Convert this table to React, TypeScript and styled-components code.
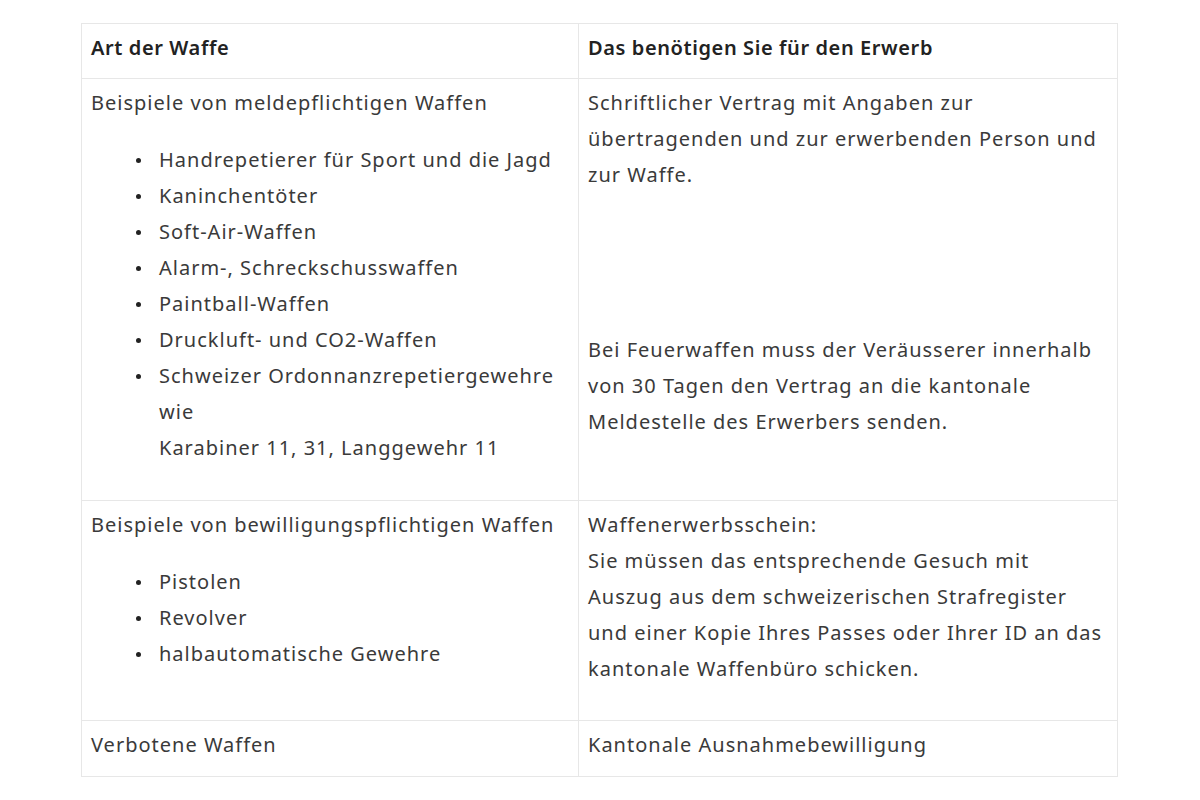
import React from "react";
import styled, {createGlobalStyle} from "styled-components";

const GlobalStyle = createGlobalStyle`
	html, body { margin: 0; padding: 0; background: #fff; }
	body { font-family: "Noto Sans", "Liberation Sans", sans-serif; color: #3a3a3a; }
`

const Page = styled.div`
	padding: 23px 0 0 81px;
`

const Table = styled.table`
	width: 1036px;
	border-collapse: collapse;
	table-layout: fixed;
	font-size: 20px;
	line-height: 36px;
	letter-spacing: 1px;
`

const HeadCell = styled.th`
	text-align: left;
	font-weight: 600;
	letter-spacing: 0.6px;
	color: #222;
	padding: 6px 9px 12px;
	border: 1px solid #e7e7e7;
	vertical-align: top;
`

const Cell = styled.td`
	padding: 6px 9px 13px;
	border: 1px solid #e7e7e7;
	vertical-align: top;
	white-space: nowrap;
`

const Text = styled.p<{ $top?: number; $bottom?: number }>`
	margin: ${(p) => p.$top || 0}px 0 ${(p) => p.$bottom || 0}px;
`

const List = styled.ul`
	margin: 21px 0;
	padding-left: 68px;
	list-style: none;
`

const Item = styled.li`
	position: relative;
	&::before {
		content: "";
		position: absolute;
		left: -23px;
		top: 16px;
		width: 5px;
		height: 5px;
		border-radius: 50%;
		background: #222;
	}
`

const Weapons = () => {
	return (
		<Page>
			<GlobalStyle />
			<Table>
				<colgroup>
					<col style={{width: 497}} />
					<col style={{width: 539}} />
				</colgroup>
				<thead>
					<tr>
						<HeadCell>Art der Waffe</HeadCell>
						<HeadCell>Das benötigen Sie für den Erwerb</HeadCell>
					</tr>
				</thead>
				<tbody>
					<tr>
						<Cell>
							<Text>Beispiele von meldepflichtigen Waffen</Text>
							<List>
								<Item>Handrepetierer für Sport und die Jagd</Item>
								<Item>Kaninchentöter</Item>
								<Item>Soft-Air-Waffen</Item>
								<Item>Alarm-, Schreckschusswaffen</Item>
								<Item>Paintball-Waffen</Item>
								<Item>Druckluft- und CO2-Waffen</Item>
								<Item>Schweizer Ordonnanzrepetiergewehre<br />wie<br />Karabiner 11, 31, Langgewehr 11</Item>
							</List>
						</Cell>
						<Cell>
							<Text>Schriftlicher Vertrag mit Angaben zur<br />übertragenden und zur erwerbenden Person und<br />zur Waffe.</Text>
							<Text $top={139}>Bei Feuerwaffen muss der Veräusserer innerhalb<br />von 30 Tagen den Vertrag an die kantonale<br />Meldestelle des Erwerbers senden.</Text>
						</Cell>
					</tr>
					<tr>
						<Cell>
							<Text>Beispiele von bewilligungspflichtigen Waffen</Text>
							<List>
								<Item>Pistolen</Item>
								<Item>Revolver</Item>
								<Item>halbautomatische Gewehre</Item>
							</List>
						</Cell>
						<Cell>
							<Text $bottom={20}>Waffenerwerbsschein:<br />Sie müssen das entsprechende Gesuch mit<br />Auszug aus dem schweizerischen Strafregister<br />und einer Kopie Ihres Passes oder Ihrer ID an das<br />kantonale Waffenbüro schicken.</Text>
						</Cell>
					</tr>
					<tr>
						<Cell>
							<Text>Verbotene Waffen</Text>
						</Cell>
						<Cell>
							<Text>Kantonale Ausnahmebewilligung</Text>
						</Cell>
					</tr>
				</tbody>
			</Table>
		</Page>
	);
};

export default Weapons;
